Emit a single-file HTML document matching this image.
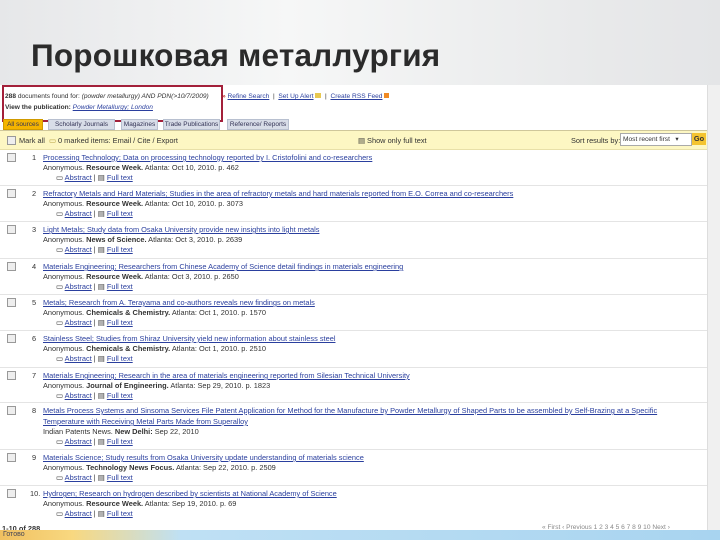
<!DOCTYPE html><html><head><meta charset="utf-8"><style>
body{margin:0;width:720px;height:540px;overflow:hidden;position:relative;font-family:"Liberation Sans",sans-serif;background:linear-gradient(90deg,#e6e7e9,#f6f7f7 40%,#e9eaeb 80%,#e4e5e7);}
h1{position:absolute;left:31px;top:37px;margin:0;font-size:31.5px;font-weight:bold;color:#2b2b2b;letter-spacing:0.2px}
.pg{position:absolute;left:0;top:85px;width:707px;height:445px;background:#fff;font-size:7.4px;color:#333}
.sb{position:absolute;left:707px;top:85px;width:13px;height:445px;background:#f0f0f0;border-left:1px solid #ddd}
.red{position:absolute;left:2px;top:0;width:217px;height:33px;border:2px solid #a3203a}
.a{color:#2a3f9e;text-decoration:underline}
.abs{position:absolute;white-space:nowrap}
.tb{position:absolute;left:0;top:45px;width:707px;height:18px;background:#fdf7c3;border-top:1px solid #cfc79a;border-bottom:1px solid #e8e0a8}
.cb{position:absolute;width:7px;height:7px;border:1px solid #999;background:#eee}
.sep{position:absolute;left:0;width:707px;height:1px;background:#e4e4e4}
.tab{position:absolute;top:34px;height:9px;background:#d8dde8;border:1px solid #b8c0d0;font-size:6.5px;color:#335;text-align:center;line-height:9px;overflow:hidden;white-space:nowrap}
</style></head><body>
<h1>Порошковая металлургия</h1>
<div class="sb"></div>
<div class="pg">
<div class="red"></div>
<div class="abs" style="left:5px;top:8px;font-size:6.6px"><b>288</b> documents found for: <i>(powder metallurgy) AND PDN(&gt;10/7/2009)</i></div>
<div class="abs" style="left:222px;top:8px;font-size:6.6px"><span style="color:#a00">»</span> <span class="a">Refine Search</span> &nbsp;|&nbsp; <span class="a">Set Up Alert</span> <span style="background:#e8c850;display:inline-block;width:6px;height:5px"></span> &nbsp;|&nbsp; <span class="a">Create RSS Feed</span> <span style="background:#f08a24;display:inline-block;width:5px;height:5px"></span></div>
<div class="abs" style="left:5px;top:19px;font-size:6.6px"><b>View the publication:</b> <span class="a" style="font-style:italic">Powder Metallurgy; London</span></div>
<div class="tab" style="left:3px;width:38px;background:#f4b400;border-color:#d09a00">All sources</div>
<div class="tab" style="left:48px;width:65px">Scholarly Journals</div>
<div class="tab" style="left:121px;width:35px">Magazines</div>
<div class="tab" style="left:163px;width:55px">Trade Publications</div>
<div class="tab" style="left:227px;width:60px">Reference/ Reports</div>
<div class="tb">
<div class="cb" style="left:7px;top:5px"></div>
<div class="abs" style="left:19px;top:5px">Mark all &nbsp;<span style="color:#b8a040">▭</span> 0 marked items: Email / Cite / Export</div>
<div class="abs" style="left:358px;top:5px">▤ Show only full text</div>
<div class="abs" style="left:571px;top:5px">Sort results by:</div>
<div class="abs" style="left:620px;top:2px;width:68px;height:11px;border:1px solid #aaa;background:#fff;line-height:11px;padding-left:2px;font-size:6.6px">Most recent first &nbsp;&nbsp;▾</div>
<div class="abs" style="left:692px;top:2px;width:14px;height:12px;background:#f4c430;text-align:center;line-height:12px;font-weight:bold">Go</div>
</div>
<div id="e"></div>
<div class="abs" style="left:2px;top:439px;font-weight:bold">1-10 of 288</div>
<div class="abs" style="left:542px;top:439px;color:#888;font-size:6.6px">« First ‹ Previous 1 2 3 4 5 6 7 8 9 10 Next ›</div>
</div>
<div style="position:absolute;left:0;top:530px;width:720px;height:10px;background:linear-gradient(90deg,#f0c060,#f8d880 10%,#bfe0f4 25%,#a8d4f0);font-size:7px;color:#445;line-height:10px;padding-left:3px;font-family:'Liberation Sans',sans-serif">Готово</div>
<script>
var E=[
[68,"Processing Technology; Data on processing technology reported by I. Cristofolini and co-researchers",null,"Anonymous. <b>Resource Week.</b> Atlanta: Oct 10, 2010. p. 462"],
[104,"Refractory Metals and Hard Materials; Studies in the area of refractory metals and hard materials reported from E.O. Correa and co-researchers",null,"Anonymous. <b>Resource Week.</b> Atlanta: Oct 10, 2010. p. 3073"],
[140,"Light Metals; Study data from Osaka University provide new insights into light metals",null,"Anonymous. <b>News of Science.</b> Atlanta: Oct 3, 2010. p. 2639"],
[177,"Materials Engineering; Researchers from Chinese Academy of Science detail findings in materials engineering",null,"Anonymous. <b>Resource Week.</b> Atlanta: Oct 3, 2010. p. 2650"],
[213,"Metals; Research from A. Terayama and co-authors reveals new findings on metals",null,"Anonymous. <b>Chemicals &amp; Chemistry.</b> Atlanta: Oct 1, 2010. p. 1570"],
[249,"Stainless Steel; Studies from Shiraz University yield new information about stainless steel",null,"Anonymous. <b>Chemicals &amp; Chemistry.</b> Atlanta: Oct 1, 2010. p. 2510"],
[286,"Materials Engineering; Research in the area of materials engineering reported from Silesian Technical University",null,"Anonymous. <b>Journal of Engineering.</b> Atlanta: Sep 29, 2010. p. 1823"],
[321,"Metals Process Systems and Sinsoma Services File Patent Application for Method for the Manufacture by Powder Metallurgy of Shaped Parts to be assembled by Self-Brazing at a Specific","Temperature with Receiving Metal Parts Made from Superalloy","Indian Patents News. <b>New Delhi:</b> Sep 22, 2010"],
[368,"Materials Science; Study results from Osaka University update understanding of materials science",null,"Anonymous. <b>Technology News Focus.</b> Atlanta: Sep 22, 2010. p. 2509"],
[404,"Hydrogen; Research on hydrogen described by scientists at National Academy of Science",null,"Anonymous. <b>Resource Week.</b> Atlanta: Sep 19, 2010. p. 69"]];
var h="";E.forEach(function(e,i){var t=e[0],y=t;
if(i>0)h+='<div class="sep" style="top:'+(t-4)+'px"></div>';
h+='<div class="cb" style="left:7px;top:'+(t)+'px"></div>';
h+='<div class="abs" style="left:'+(i==9?30:32)+'px;top:'+t+'px">'+(i+1)+(i==9?'.':'')+'</div>';
h+='<div class="abs a" style="left:43px;top:'+t+'px">'+e[1]+'</div>';
if(e[2]){y+=11;h+='<div class="abs a" style="left:43px;top:'+y+'px">'+e[2]+'</div>';}
y+=10;h+='<div class="abs" style="left:43px;top:'+y+'px">'+e[3]+'</div>';
y+=10;h+='<div class="abs" style="left:56px;top:'+y+'px">▭ <span class="a">Abstract</span> | ▤ <span class="a">Full text</span></div>';
});
document.getElementById("e").outerHTML=h;
</script>
</body></html>
